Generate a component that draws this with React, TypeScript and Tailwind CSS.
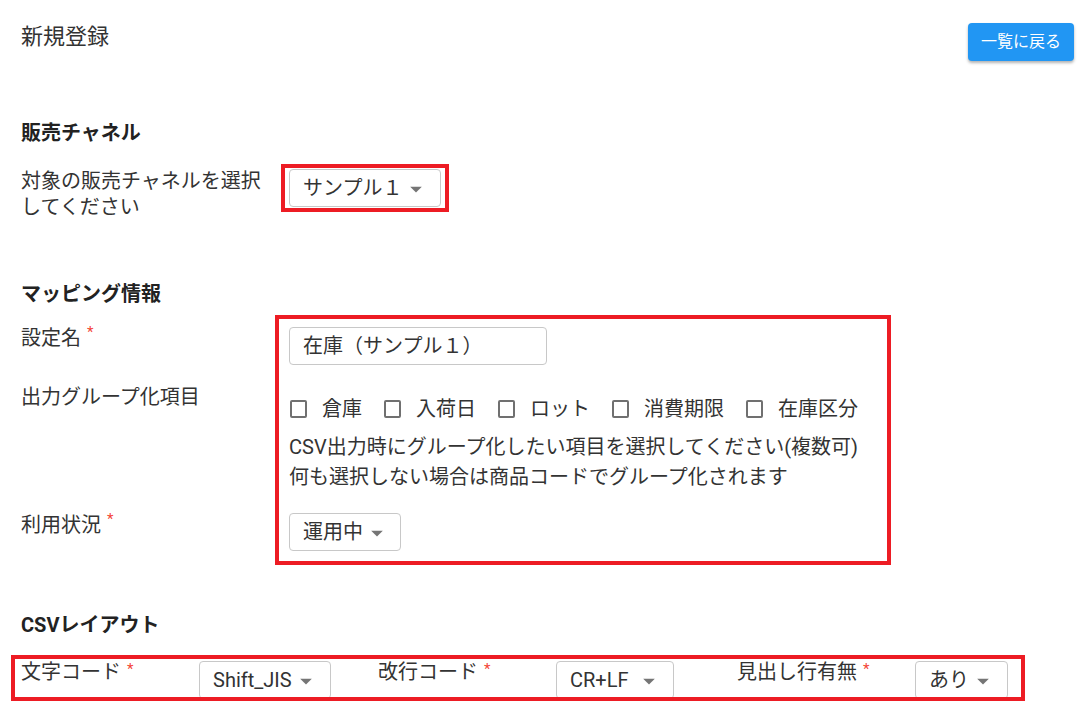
import { ReactNode } from "react"

const FONT = "font-['Roboto','Noto_Sans_CJK_JP',sans-serif]"
const TEXT = "text-[#333]"

const GROUP_ITEMS = ["倉庫", "入荷日", "ロット", "消費期限", "在庫区分"] as const

const CSV_FIELDS = [
  { label: "文字コード", value: "Shift_JIS", width: "w-[132px]" },
  { label: "改行コード", value: "CR+LF", width: "w-[118px]" },
  { label: "見出し行有無", value: "あり", width: "w-[93px]" },
] as const

function Arrow() {
  return (
    <svg width="28" height="28" viewBox="0 0 24 24" className="mt-[2px] shrink-0" aria-hidden>
      <path d="M7 10l5 5 5-5z" fill="#757575" />
    </svg>
  )
}

function Select({ value, width }: { value: string; width: string }) {
  return (
    <div
      className={`flex h-[38px] shrink-0 items-center justify-between rounded-[4px] border border-[#c8c8c8] bg-white pl-[13px] pr-[10px] text-[20px] leading-[30px] ${width}`}
    >
      <span className="whitespace-nowrap">{value}</span>
      <Arrow />
    </div>
  )
}

function Required() {
  return <span className="ml-[6px] align-top text-[15px] leading-[18px] text-[#f44336]">*</span>
}

function Label({ children, className = "" }: { children: ReactNode; className?: string }) {
  return <p className={`text-[20px] leading-[30px] ${className}`}>{children}</p>
}

function Heading({ children, className = "" }: { children: ReactNode; className?: string }) {
  return <h2 className={`text-[20px] font-bold leading-[30px] text-[#222] ${className}`}>{children}</h2>
}

export default function App() {
  return (
    <main className={`min-h-[707px] overflow-hidden bg-white px-[21px] pt-[20px] ${FONT} ${TEXT}`}>
      {/* Header */}
      <div className="-mr-[10px] flex items-start justify-between">
        <h1 className="text-[22px] font-normal leading-[33px] text-[#333]">新規登録</h1>
        <button className="mt-[3px] h-[38px] w-[106px] rounded-[4px] bg-[#2196f3] text-[16px] text-white shadow-[0_2px_3px_rgba(0,0,0,0.3)]">
          一覧に戻る
        </button>
      </div>

      {/* 販売チャネル */}
      <Heading className="mt-[57px]">販売チャネル</Heading>
      <div className="mt-[16px] flex items-start">
        <p className="mr-[6px] mt-[4px] w-[254px] text-[20px] leading-[26px]">
          対象の販売チャネルを選択してください
        </p>
        <div className="border-4 border-[#ed1c24] px-[4px] py-[1px]">
          <Select value="サンプル１" width="w-[152px]" />
        </div>
      </div>

      {/* マッピング情報 */}
      <Heading className="mt-[59px]">マッピング情報</Heading>
      <div className="mt-[6px] flex items-start">
        <div className="flex w-[254px] flex-col">
          <Label className="mt-[8px]">
            設定名
            <Required />
          </Label>
          <Label className="mt-[29px]">出力グループ化項目</Label>
          <Label className="mt-[98px]">
            利用状況
            <Required />
          </Label>
        </div>
        <div className="w-[616px] border-4 border-[#ed1c24] pb-[10px] pl-[10px] pt-[8px]">
          <div className="flex h-[38px] w-[258px] items-center rounded-[4px] border border-[#c8c8c8] px-[13px] text-[20px]">
            在庫（サンプル１）
          </div>
          <div className="mt-[29px] flex h-[30px] items-center gap-[21px] text-[20px] leading-[30px]">
            {GROUP_ITEMS.map((item) => (
              <label key={item} className="flex items-center">
                <span className="ml-[1px] h-[18px] w-[17px] rounded-[2px] border-2 border-[#707070]" />
                <span className="ml-[15px]">{item}</span>
              </label>
            ))}
          </div>
          <p className="mt-[8px] text-[20px] leading-[30px]">
            CSV出力時にグループ化したい項目を選択してください(複数可)
            <br />
            何も選択しない場合は商品コードでグループ化されます
          </p>
          <div className="mt-[21px]">
            <Select value="運用中" width="w-[112px]" />
          </div>
        </div>
      </div>

      {/* CSVレイアウト */}
      <Heading className="mt-[45px]">CSVレイアウト</Heading>
      <div className="-ml-[10px] mt-[15px] h-[46px] w-[1014px] overflow-hidden border-4 border-[#ed1c24] pl-[6px]">
        <div className="grid grid-cols-[357px_359px_auto]">
          {CSV_FIELDS.map((f) => (
            <div key={f.label} className="grid grid-cols-[178px_auto]">
              <p className="mt-[1px] text-[20px] leading-[24px]">
                {f.label}
                <Required />
              </p>
              <div className="mt-[2px]">
                <Select value={f.value} width={f.width} />
              </div>
            </div>
          ))}
        </div>
      </div>
    </main>
  )
}
